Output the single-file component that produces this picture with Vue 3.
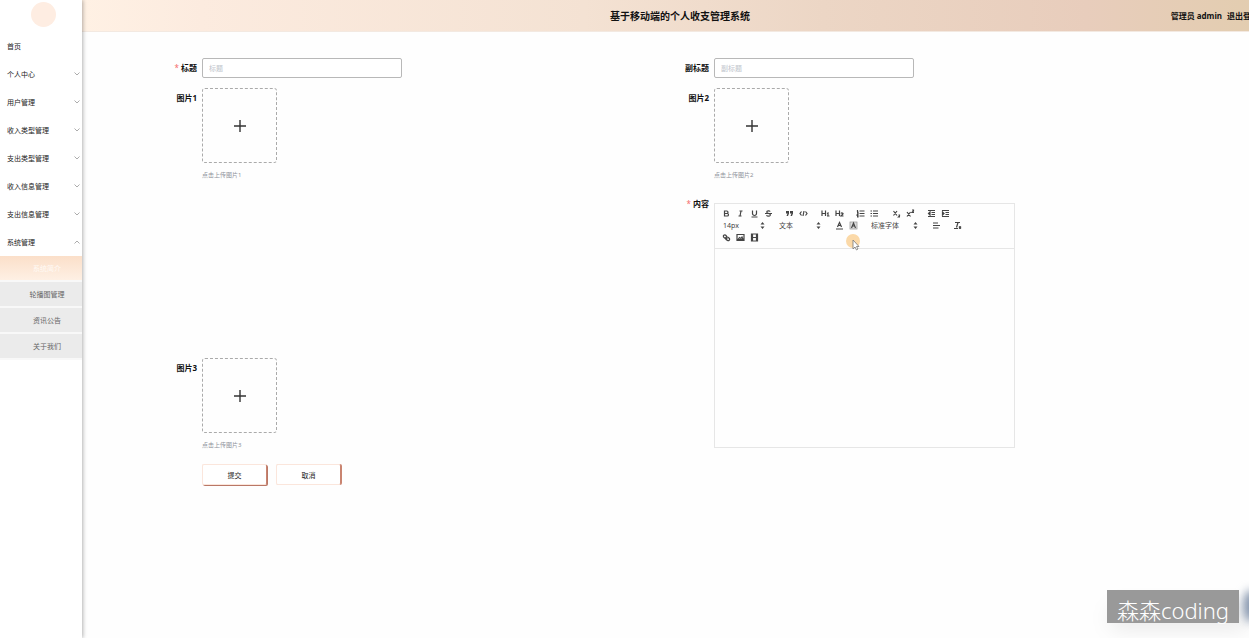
<script setup>
import { ref } from 'vue'

const menu = ['首页', '个人中心', '用户管理', '收入类型管理', '支出类型管理', '收入信息管理', '支出信息管理', '系统管理']
const submenu = ['系统简介', '轮播图管理', '资讯公告', '关于我们']
const title = ref('')
const subtitle = ref('')

const textTools = [
  [
    { name: '粗体', d: 'M5 4H9.5A2.5 2.5 0 0 1 9.5 9H5ZM5 9H10.5A2.5 2.5 0 0 1 10.5 14H5Z' },
    { name: '斜体', d: 'M7 4H13M5 14H11M8 14L10 4' },
    { name: '下划线', d: 'M5 3V9A4 4 0 0 0 13 9V3M3 16H15' },
    { name: '删除线', d: 'M2 9H16M12.5 5C11 3 5.5 3 5.5 6C5.5 8 8 8.500 9 9C12 9.500 13 10.500 12.500 12.500C11.500 15 6.500 15 5 12.500' },
  ],
  [
    { name: '引用', f: 'M2 4H8V9L6 14H3L5 9H2ZM10 4H16V9L14 14H11L13 9H10Z' },
    { name: '代码', d: 'M5 5L2 9L5 13M13 5L16 9L13 13M10 4L8 14' },
  ],
  [
    { name: '一级标题', d: 'M2 3V14M9 3V14M2 9H9M12 9L14 8V14M12 14H17' },
    { name: '二级标题', d: 'M2 3V14M9 3V14M2 9H9M12 9C13 7 17 8 16 10L12 14H17' },
  ],
  [
    { name: '有序列表', d: 'M7 4H17M7 9H17M7 14H17M3 2V6M2 6H5M2 8H4V10L2 12H5M2 14H4V16H2' },
    { name: '无序列表', d: 'M6 4H16M6 9H16M6 14H16M1 4H4M1 9H4M1 14H4' },
  ],
  [
    { name: '下标', d: 'M3 4L10 13M10 4L3 13M13 12H15V14L13 16H16' },
    { name: '上标', d: 'M2 6L9 15M9 6L2 15M12 2H15V4L12 7H16' },
  ],
  [
    { name: '减少缩进', d: 'M2 3H16M2 15H16M9 7H16M9 11H16M6 6V12L3 9Z' },
    { name: '增加缩进', d: 'M2 3H16M2 15H16M9 7H16M9 11H16M3 6V12L6 9Z' },
  ],
]
const colorTools = [
  { name: '文字颜色', d: 'M5 12L9 3L13 12M6 9H12M2 16H16' },
  { name: '背景颜色', d: 'M5 14L9 4L13 14M7 10H11', frame: true },
]
const alignTool = { name: '对齐', d: 'M2 4H12M2 9H16M2 14H13' }
const cleanTool = { name: '清除格式', d: 'M4 3H14M10 3L7 13M2 15H10M12 11L16 15M16 11L12 15' }
const mediaTools = [
  { name: '链接', d: 'M7 10L11 12M7 4L9 6A3 3 0 0 1 5 10L3 8A3 3 0 0 1 7 4M11 8L15 11A3 3 0 0 1 11 15L8 13A3 3 0 0 1 11 8' },
  { name: '图片', d: 'M2 3H16V15H2ZM4 13L7 9L10 11L12 8L14 13Z' },
  { name: '视频', d: 'M3 2H15V16H3ZM5 2V16M13 2V16M5 9H13' },
]
</script>

<template>
  <div class="page">
    <aside class="sidebar">
      <div class="avatar"></div>
      <nav>
        <a v-for="(item, i) in menu" :key="item" href="#" class="item">
          <span>{{ item }}</span>
          <svg v-if="i > 0" class="chevron" :class="{ open: i === 7 }" viewBox="0 0 6 4"><path d="M0.500 0.500L3 3L5.500 0.500" /></svg>
        </a>
        <div class="submenu">
          <a v-for="(item, i) in submenu" :key="item" href="#" class="subitem" :class="{ active: i === 0 }">{{ item }}</a>
        </div>
      </nav>
    </aside>

    <main class="main">
      <header class="header">
        <h1>基于移动端的个人收支管理系统</h1>
        <div class="user"><span>管理员 admin</span><a href="#">退出登录</a></div>
      </header>

      <form class="form" @submit.prevent>
        <div class="field">
          <label for="title"><i>*</i> 标题</label>
          <input id="title" v-model="title" type="text" placeholder="标题" />
        </div>
        <div class="field">
          <label for="subtitle">副标题</label>
          <input id="subtitle" v-model="subtitle" type="text" placeholder="副标题" />
        </div>
        <div v-for="n in 3" :key="n" class="field" :class="{ third: n === 3 }">
          <label :for="'upload' + n">图片{{ n }}</label>
          <div>
            <button :id="'upload' + n" type="button" class="upload">
              <svg viewBox="0 0 14 14"><path d="M7 1V13M1 7H13" /></svg>
            </button>
            <p class="tip">点击上传图片{{ n }}</p>
          </div>
        </div>
        <div class="field content">
          <label for="content"><i>*</i> 内容</label>
          <div class="editor">
            <div class="toolbar">
              <div class="tools">
                <div v-for="(group, g) in textTools" :key="g" class="group">
                  <button v-for="t in group" :key="t.name" type="button" :aria-label="t.name">
                    <svg viewBox="0 0 18 18"><path v-if="t.f" class="solid" :d="t.f" /><path v-else :d="t.d" /></svg>
                  </button>
                </div>
              </div>
              <div class="tools">
                <div class="group picker">
                  <select aria-label="字号"><option>14px</option></select>
                  <svg viewBox="0 0 18 18"><path class="solid" d="M5 7L9 2L13 7ZM5 11L9 16L13 11Z" /></svg>
                </div>
                <div class="group picker">
                  <select aria-label="段落"><option>文本</option></select>
                  <svg viewBox="0 0 18 18"><path class="solid" d="M5 7L9 2L13 7ZM5 11L9 16L13 11Z" /></svg>
                </div>
                <div class="group">
                  <button v-for="t in colorTools" :key="t.name" type="button" :aria-label="t.name">
                    <svg viewBox="0 0 18 18"><rect v-if="t.frame" class="frame" x="2" y="2" width="14" height="14" /><path :d="t.d" /></svg>
                  </button>
                </div>
                <div class="group picker wide">
                  <select aria-label="字体"><option>标准字体</option></select>
                  <svg viewBox="0 0 18 18"><path class="solid" d="M5 7L9 2L13 7ZM5 11L9 16L13 11Z" /></svg>
                </div>
                <div class="group">
                  <button type="button" :aria-label="alignTool.name"><svg viewBox="0 0 18 18"><path :d="alignTool.d" /></svg></button>
                </div>
                <div class="group">
                  <button type="button" :aria-label="cleanTool.name"><svg viewBox="0 0 18 18"><path :d="cleanTool.d" /></svg></button>
                </div>
              </div>
              <div class="tools">
                <div class="group">
                  <button v-for="t in mediaTools" :key="t.name" type="button" :aria-label="t.name">
                    <svg viewBox="0 0 18 18"><path :d="t.d" /></svg>
                  </button>
                </div>
              </div>
              <div class="pointer">
                <svg viewBox="0 0 14 18">
                  <circle cx="7" cy="7" r="7" />
                  <path d="M7 6V15L9 13L10.500 16L12 15L10.500 12.500H13Z" />
                </svg>
              </div>
            </div>
            <textarea id="content"></textarea>
          </div>
        </div>
        <div class="actions">
          <button type="submit" class="submit">提交</button>
          <button type="button">取消</button>
        </div>
      </form>
    </main>

    <div class="haze"></div>
    <div class="glow"></div>
    <div class="watermark">森森coding</div>
  </div>
</template>

<style>
body {
  margin: 0;
}
</style>

<style scoped>
.page {
  position: relative;
  display: flex;
  min-height: 100vh;
  overflow: hidden;
  background: #fefefe;
  color: #222;
  font-family: "Noto Sans", "Noto Sans CJK SC", sans-serif;
  font-size: 7px;
}
.page * {
  box-sizing: border-box;
}
a {
  color: inherit;
  text-decoration: none;
}
button, input, select, textarea {
  margin: 0;
  padding: 0;
  border: 0;
  background: none;
  color: inherit;
  font-family: inherit;
  font-size: 7px;
}
.sidebar {
  position: relative;
  z-index: 1;
  flex: 0 0 82px;
  background: #fff;
  box-shadow: 1px 0 4px rgba(0, 0, 0, 0.3);
}
.avatar {
  width: 25px;
  height: 25px;
  margin: 2px 0 5px 31px;
  border-radius: 50%;
  background: #feede2;
}
.item {
  display: flex;
  align-items: center;
  justify-content: space-between;
  height: 28px;
  padding: 0 2px 0 7px;
}
.chevron {
  width: 6px;
  height: 4px;
  fill: none;
  stroke: #888;
  stroke-width: 0.7;
}
.chevron.open {
  transform: rotate(180deg);
}
.subitem {
  display: flex;
  align-items: center;
  justify-content: center;
  height: 26px;
  padding-left: 12px;
  border-bottom: 2px solid #f8f8f8;
  background: #ebebeb;
  color: #666;
}
.subitem.active {
  background: linear-gradient(#fbdfc9, #fef0e4);
  color: #fffaf5;
}
.main {
  flex: 1;
  min-width: 0;
}
.header {
  display: grid;
  grid-template-columns: 1fr auto 1fr;
  align-items: center;
  width: calc(100% + 29px);
  height: 32px;
  padding: 0 19px;
  border-bottom: 1px solid #f3e9e1;
  background: linear-gradient(90deg, #fff1e4, #fcebdf 10%, #f4e2d3 42%, #ecd6c5 62%, #e8cdbc 84%, #e2cdae);
  color: #111;
}
h1 {
  grid-column: 2;
  margin: 0;
  font-size: 10px;
  line-height: 30px;
}
.user {
  display: flex;
  justify-content: flex-end;
  gap: 5px;
  font-size: 8px;
  font-weight: 700;
  line-height: 30px;
  white-space: nowrap;
}
.form {
  display: grid;
  grid-template-columns: 1fr 1fr;
  grid-template-rows: 30px 115px 155px 106px 22px;
  padding: 26px 83px 0 60px;
}
.field {
  display: flex;
  align-items: flex-start;
}
.field label {
  flex: 0 0 60px;
  padding-right: 5px;
  color: #111;
  font-size: 8px;
  font-weight: 700;
  line-height: 20px;
  text-align: right;
}
.field i {
  color: #f56c6c;
  font-style: normal;
  font-weight: 400;
}
.field input {
  width: 200px;
  height: 20px;
  padding: 0 6px;
  border: 1px solid #b8b8b8;
  border-radius: 2px;
  background: #fff;
}
input::placeholder {
  color: #c0c4cc;
}
.upload {
  display: flex;
  align-items: center;
  justify-content: center;
  width: 75px;
  height: 75px;
  border: 1px dashed #aaa;
  border-radius: 3px;
}
.upload svg {
  width: 14px;
  height: 14px;
  fill: none;
  stroke: #333;
  stroke-width: 1.4;
}
.tip {
  margin: 7px 0 0;
  color: #8f939b;
  font-size: 6px;
  line-height: 10px;
}
.third {
  grid-column: 1;
  grid-row: 4;
}
.content {
  grid-column: 2;
  grid-row: 3 / 5;
}
.content label {
  line-height: 2px;
}
.editor {
  display: flex;
  flex-direction: column;
  width: 301px;
  height: 245px;
  border: 1px solid #e6e6e6;
}
.toolbar {
  position: relative;
  height: 45px;
  padding: 3px 4px;
  border-bottom: 1px solid #e6e6e6;
}
.tools, .group {
  display: flex;
}
.group {
  margin-right: 7px;
}
.group:nth-child(even) {
  margin-right: 8px;
}
.group button {
  display: flex;
  align-items: center;
  justify-content: center;
  width: 14px;
  height: 12px;
}
.group svg {
  width: 9px;
  height: 9px;
  fill: none;
  stroke: #444;
  stroke-width: 2.4;
}
.group svg .solid {
  fill: #444;
  stroke: none;
}
.group svg .frame {
  fill: #ddd;
  stroke: #999;
  stroke-width: 1.5;
}
.picker {
  align-items: center;
  width: 49px;
  height: 12px;
  padding: 0 1px 0 4px;
}
.picker.wide {
  width: 54px;
}
.picker select {
  flex: 1;
  min-width: 0;
  height: 12px;
  appearance: none;
  color: #444;
}
.pointer {
  position: absolute;
  top: 30px;
  left: 131px;
}
.pointer svg {
  display: block;
  width: 14px;
  height: 18px;
}
.pointer circle {
  fill: #fbd9a8;
}
.pointer path {
  fill: #fff;
  stroke: #777;
  stroke-width: 0.8;
}
textarea {
  flex: 1;
  padding: 6px;
  resize: none;
}
.actions {
  display: flex;
  grid-column: 1;
  grid-row: 5;
  align-items: flex-start;
  gap: 9px;
  padding-left: 60px;
}
.actions button {
  width: 65px;
  height: 21px;
  border: 1px solid #fbe6dc;
  border-right-color: #c98470;
  border-radius: 2px;
  background: #fff;
  box-shadow: 1px 0 0 #c98470;
}
.actions .submit {
  box-shadow: 1px 1px 0 #b97766;
}
.watermark {
  position: absolute;
  right: 10px;
  bottom: 15px;
  height: 33px;
  padding: 0 10px;
  background: #999;
  color: #fff;
  font-size: 22px;
  font-weight: 300;
  line-height: 40px;
}
.haze {
  position: absolute;
  right: 0;
  bottom: 8px;
  width: 140px;
  height: 24px;
  border-radius: 12px;
  background: rgba(0, 0, 0, 0.08);
  filter: blur(10px);
}
.glow {
  position: absolute;
  right: -10px;
  bottom: 16px;
  width: 16px;
  height: 32px;
  border-radius: 50%;
  background: #8595ad;
  filter: blur(5px);
}
</style>
